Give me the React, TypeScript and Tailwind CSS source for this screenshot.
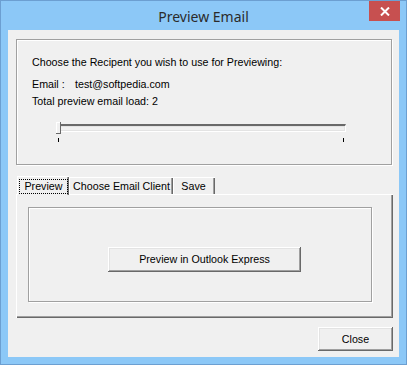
import React from "react";

const btn =
  "shadow-[inset_-1px_-1px_#696969,inset_1px_1px_#ffffff,inset_-2px_-2px_#a0a0a0,inset_2px_2px_#e3e3e3] bg-[#f0f0f0] flex items-center justify-center text-[10.7px] text-black";

export default function App() {
  return (
    <div
      className="w-[407px] h-[365px] bg-[#8cc8f7] border border-[#6c9fd1] flex flex-col"
      style={{ fontFamily: '"Liberation Sans", Arial, sans-serif' }}
    >
      {/* Title bar */}
      <div className="relative h-[29px] flex items-center justify-center">
        <span
          className="text-[14px] text-[#2b2b2b] mt-[1px]"
          style={{ fontFamily: '"Noto Sans", "Open Sans", sans-serif' }}
        >
          Preview Email
        </span>
        <div className="absolute right-[6px] top-0 w-[31px] h-[20px] bg-[#c75050] flex items-center justify-center">
          <svg width="10" height="9" viewBox="0 0 10 9">
            <path d="M1 0.5 L9 8.5 M9 0.5 L1 8.5" stroke="#fff" strokeWidth="2" />
          </svg>
        </div>
      </div>

      {/* Client area */}
      <div className="mx-[7px] h-[327px] bg-[#f0f0f0] flex flex-col px-[8px] pt-[9px]">
        {/* Group box */}
        <div className="w-[376px] h-[126px] border border-[#a0a0a0] shadow-[inset_1px_1px_#ffffff,1px_1px_#ffffff] pl-[15px] pt-[16px] flex flex-col text-[10.7px] text-black leading-[13px]">
          <div>Choose the Recipent you wish to use for Previewing:</div>
          <div className="mt-[9px] flex">
            <span className="w-[43px]">Email :</span>
            <span>test@softpedia.com</span>
          </div>
          <div className="mt-[4px]">Total preview email load: 2</div>
          {/* Slider */}
          <div className="mt-[16px] ml-[26px] w-[288px] flex flex-col">
            <div className="relative h-[9px]">
              <div className="h-[8px] border-t-2 border-[#696969] border-b border-b-[#ffffff] border-x border-x-[#ffffff] bg-[#f0f0f0] shadow-[inset_0_0_0_1px_#e3e3e3]" />
              <div className="absolute left-[-2px] top-[-2px] w-[5px] h-[12px] bg-[#f0f0f0] shadow-[inset_-1px_-1px_#696969,inset_1px_1px_#ffffff]" />
            </div>
            <div className="flex justify-between mt-[5px]">
              <div className="w-[1px] h-[4px] bg-black" />
              <div className="w-[1px] h-[4px] bg-black mr-[2px]" />
            </div>
          </div>
        </div>

        {/* Tabs */}
        <div className="mt-[10px] flex items-end h-[19px] pl-[1px] text-[10.7px] text-black">
          <div className="h-[19px] w-[52px] bg-[#f0f0f0] border-t border-l border-white shadow-[inset_-1px_0_#696969,inset_-2px_0_#a0a0a0] flex items-center justify-center relative z-10 mb-[-1px]">
            <span className="border border-dotted border-black px-[4px] leading-[13px] mt-[1px]">Preview</span>
          </div>
          <div className="h-[17px] w-[104px] border-t border-l border-white shadow-[inset_-1px_0_#696969,inset_-2px_0_#a0a0a0] flex items-center justify-center">
            Choose Email Client
          </div>
          <div className="h-[17px] w-[42px] border-t border-l border-white shadow-[inset_-1px_0_#696969,inset_-2px_0_#a0a0a0] flex items-center justify-center pr-[2px]">
            Save
          </div>
        </div>

        {/* Tab panel */}
        <div className="w-[377px] h-[124px] border-t border-l border-white shadow-[inset_-1px_-1px_#696969,inset_-2px_-2px_#a0a0a0] pl-[11px] pt-[12px]">
          <div className="w-[344px] h-[95px] border border-[#a0a0a0] shadow-[inset_1px_1px_#ffffff,1px_1px_#ffffff] pl-[79px] pt-[39px]">
            <div className={btn + " w-[193px] h-[25px]"}>Preview in Outlook Express</div>
          </div>
        </div>

        {/* Close */}
        <div className="flex justify-end mt-[9px] mr-[-2px]">
          <div className={btn + " w-[75px] h-[24px]"}>Close</div>
        </div>
      </div>
    </div>
  );
}
